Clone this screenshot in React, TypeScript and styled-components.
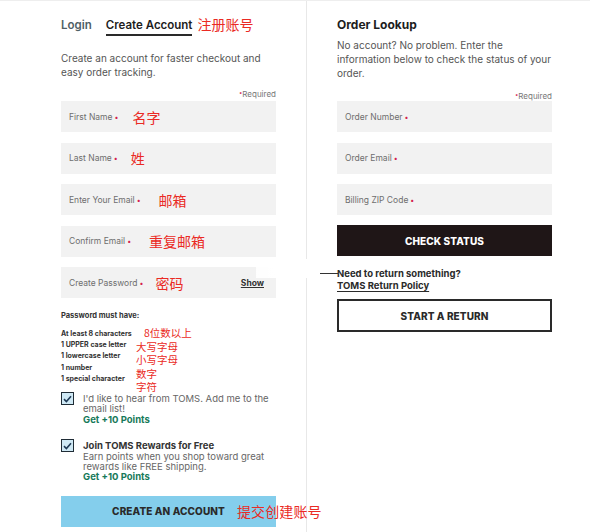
import React from "react";
import styled, { createGlobalStyle } from "styled-components";

const GlobalStyle = createGlobalStyle`
  body {
    margin: 0;
    background: #ffffff;
    font-family: Inter, "Noto Sans", "Noto Sans CJK SC", sans-serif;
    color: #222;
  }
`;

const Page = styled.div`
  position: relative;
  width: 590px;
  height: 532px;
  display: flex;
  border-top: 1px solid #eeeeee;
  box-sizing: border-box;
  overflow: hidden;
`;

const LeftPanel = styled.section`
  width: 307px;
  box-sizing: border-box;
  padding: 16px 30px 0 61px;
  border-right: 1px solid #e8e8e8;
  display: flex;
  flex-direction: column;
`;

const RightPanel = styled.section`
  width: 245px;
  box-sizing: border-box;
  padding: 16px 0 0 30px;
  display: flex;
  flex-direction: column;
`;

const Tabs = styled.div`
  display: flex;
  align-items: flex-start;
  gap: 14px;
  height: 20px;
`;

const Tab = styled.span<{ $active?: boolean }>`
  font-size: 11.5px;
  font-weight: 600;
  line-height: 16px;
  padding-bottom: 1px;
  color: ${(p) => (p.$active ? "#1d1d1d" : "#4f5f66")};
  border-bottom: 2px solid ${(p) => (p.$active ? "#2a2a2a" : "transparent")};
`;

const Note = styled.span<{ $size?: number; $ml?: number }>`
  font-family: "Noto Sans CJK SC", sans-serif;
  font-weight: 400;
  color: #ea2a24;
  font-size: ${(p) => p.$size ?? 14}px;
  line-height: 1;
  margin-left: ${(p) => p.$ml ?? 0}px;
  white-space: nowrap;
`;

const Intro = styled.p<{ $mt: number }>`
  margin: ${(p) => p.$mt}px 0 0;
  font-size: 10px;
  line-height: 14px;
  color: #555;
`;

const Heading = styled.h2`
  margin: 0;
  font-size: 12px;
  line-height: 16px;
  font-weight: 700;
  color: #1d1d1d;
`;

const Required = styled.div<{ $mt: number }>`
  margin-top: ${(p) => p.$mt}px;
  text-align: right;
  font-size: 8px;
  line-height: 10px;
  color: #777;
  &::before {
    content: "•";
    color: #d4204c;
    font-size: 6px;
    vertical-align: 2px;
  }
`;

const Fields = styled.div<{ $mt: number }>`
  margin-top: ${(p) => p.$mt}px;
  display: flex;
  flex-direction: column;
  gap: 10.5px;
`;

const Field = styled.div`
  height: 31px;
  background: #f2f2f2;
  display: flex;
  align-items: center;
  padding: 0 12px 0 8px;
`;

const Label = styled.span`
  font-size: 8.5px;
  color: #6e6e6e;
  &::after {
    content: "•";
    color: #d4204c;
    font-size: 7px;
    margin-left: 2px;
  }
`;

const Show = styled.span`
  margin-left: auto;
  font-size: 8.5px;
  font-weight: 700;
  color: #333;
  text-decoration: underline;
`;

const RulesTitle = styled.div`
  margin-top: 13px;
  font-size: 7.5px;
  line-height: 10px;
  font-weight: 700;
  color: #333;
`;

const Rules = styled.div`
  margin-top: 7px;
  height: 56px;
  display: flex;
  align-items: flex-start;
`;

const RuleList = styled.ul`
  margin: 0;
  padding: 0;
  list-style: none;
  width: 75px;
`;

const Rule = styled.li`
  font-size: 7px;
  line-height: 11.2px;
  font-weight: 700;
  color: #333;
  white-space: nowrap;
`;

const RuleNotes = styled.div`
  display: flex;
  flex-direction: column;
  margin-top: -2px;
`;

const RuleNote = styled(Note)`
  display: block;
  line-height: 13.5px;
`;

const Opt = styled.label<{ $mt: number }>`
  margin-top: ${(p) => p.$mt}px;
  display: flex;
  gap: 9px;
  align-items: flex-start;
`;

const Box = styled.span`
  flex: none;
  width: 13px;
  height: 13px;
  box-sizing: border-box;
  border: 1.5px solid #1f2c36;
  background: #cfe9f5;
  display: flex;
  align-items: center;
  justify-content: center;
  margin-top: -2px;
`;

const OptText = styled.div`
  font-size: 9.5px;
  line-height: 10.4px;
  color: #666;
`;

const OptTitle = styled.div`
  font-weight: 700;
  color: #333;
`;

const Points = styled.div`
  font-weight: 700;
  color: #177a5a;
`;

const Button = styled.div<{ $variant: "blue" | "dark" | "outline"; $mt: number }>`
  position: relative;
  margin-top: ${(p) => p.$mt}px;
  height: ${(p) => (p.$variant === "outline" ? 33 : 31)}px;
  box-sizing: border-box;
  display: flex;
  align-items: center;
  justify-content: center;
  font-size: 10px;
  font-weight: 800;
  letter-spacing: 0.1px;
  background: ${(p) =>
    p.$variant === "blue" ? "#84ceec" : p.$variant === "dark" ? "#1f1617" : "#fff"};
  color: ${(p) => (p.$variant === "dark" ? "#fff" : "#2a2a2a")};
  border: ${(p) => (p.$variant === "outline" ? "2px solid #2a2a2a" : "none")};
`;

const ButtonNote = styled(Note)`
  position: absolute;
  left: 176px;
  top: 8px;
`;

const ReturnBlock = styled.div`
  margin-top: 12px;
  font-size: 9.5px;
  line-height: 12px;
  font-weight: 700;
  color: #2a2a2a;
`;

const ReturnAsk = styled.div`
  position: relative;
  &::before {
    content: "";
    position: absolute;
    left: -18px;
    top: 5px;
    width: 19px;
    height: 1px;
    background: #333;
  }
`;

const PolicyLink = styled.span`
  text-decoration: underline;
  text-underline-offset: 2px;
`;

const Patch = styled.div`
  position: absolute;
  left: 256px;
  top: 258px;
  width: 64px;
  height: 19px;
  background: linear-gradient(90deg, rgba(255, 255, 255, 0.9), #fff 30%, #fff);
`;

const Check = () => (
  <svg width="9" height="8" viewBox="0 0 9 8">
    <path d="M1 4.2 L3.4 6.5 L8 1.3" fill="none" stroke="#1f3a56" strokeWidth="1.6" />
  </svg>
);

const accountFields = [
  { label: "First Name", note: "名字", ml: 14 },
  { label: "Last Name", note: "姓", ml: 13 },
  { label: "Enter Your Email", note: "邮箱", ml: 18 },
  { label: "Confirm Email", note: "重复邮箱", ml: 18 },
  { label: "Create Password", note: "密码", ml: 12, show: true },
];

const rules = [
  "At least 8 characters",
  "1 UPPER case letter",
  "1 lowercase letter",
  "1 number",
  "1 special character",
];

const ruleNotes = ["8位数以上", "大写字母", "小写字母", "数字", "字符"];

export default function App() {
  return (
    <>
      <GlobalStyle />
      <Page>
        <LeftPanel>
          <Tabs>
            <Tab>Login</Tab>
            <Tab $active>Create Account</Tab>
            <Note $ml={-9}>注册账号</Note>
          </Tabs>
          <Intro $mt={14}>
            Create an account for faster checkout and easy order tracking.
          </Intro>
          <Required $mt={9}>Required</Required>
          <Fields $mt={2}>
            {accountFields.map((f) => (
              <Field key={f.label}>
                <Label>{f.label}</Label>
                <Note $ml={f.ml}>{f.note}</Note>
                {f.show && <Show>Show</Show>}
              </Field>
            ))}
          </Fields>
          <RulesTitle>Password must have:</RulesTitle>
          <Rules>
            <RuleList>
              {rules.map((r) => (
                <Rule key={r}>{r}</Rule>
              ))}
            </RuleList>
            <RuleNotes>
              {ruleNotes.map((n, i) => (
                <RuleNote key={n} $size={10.5} $ml={i === 0 ? 8 : 0}>
                  {n}
                </RuleNote>
              ))}
            </RuleNotes>
          </Rules>
          <Opt $mt={10}>
            <Box>
              <Check />
            </Box>
            <OptText>
              I'd like to hear from TOMS. Add me to the email list!
              <Points>Get +10 Points</Points>
            </OptText>
          </Opt>
          <Opt $mt={16}>
            <Box>
              <Check />
            </Box>
            <OptText>
              <OptTitle>Join TOMS Rewards for Free</OptTitle>
              Earn points when you shop toward great rewards like FREE shipping.
              <Points>Get +10 Points</Points>
            </OptText>
          </Opt>
          <Button $variant="blue" $mt={13}>
            CREATE AN ACCOUNT
            <ButtonNote>提交创建账号</ButtonNote>
          </Button>
        </LeftPanel>
        <RightPanel>
          <Heading>Order Lookup</Heading>
          <Intro $mt={5}>
            No account? No problem. Enter the information below to check the
            status of your order.
          </Intro>
          <Required $mt={10}>Required</Required>
          <Fields $mt={0}>
            <Field>
              <Label>Order Number</Label>
            </Field>
            <Field>
              <Label>Order Email</Label>
            </Field>
            <Field>
              <Label>Billing ZIP Code</Label>
            </Field>
          </Fields>
          <Button $variant="dark" $mt={10}>
            CHECK STATUS
          </Button>
          <ReturnBlock>
            <ReturnAsk>Need to return something?</ReturnAsk>
            <PolicyLink>TOMS Return Policy</PolicyLink>
          </ReturnBlock>
          <Button $variant="outline" $mt={7}>
            START A RETURN
          </Button>
        </RightPanel>
        <Patch />
      </Page>
    </>
  );
}
